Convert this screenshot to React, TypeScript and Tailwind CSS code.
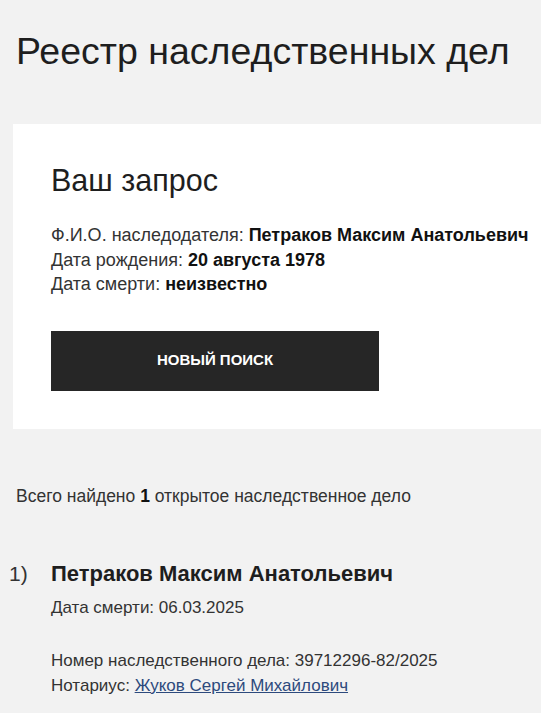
export default function App() {
  return (
    <div className="min-h-[713px] bg-[#f2f2f2] text-[#1e1e1e] font-['Liberation_Sans',Arial,sans-serif] overflow-hidden">
      <h1 className="pl-4 pt-[28px] text-[37.5px] leading-[46px] font-normal">
        Реестр наследственных дел
      </h1>

      <section className="mt-[50px] ml-[13px] bg-white pl-[38px] pt-[38px] pb-[38px]">
        <h2 className="text-[30.5px] leading-[36px] font-normal">Ваш запрос</h2>
        <div className="mt-[25px] text-[18px] leading-[24.5px] text-[#333] whitespace-nowrap">
          <p>
            Ф.И.О. наследодателя: <b className="text-[#111]">Петраков Максим Анатольевич</b>
          </p>
          <p>
            Дата рождения: <b className="text-[#111]">20 августа 1978</b>
          </p>
          <p>
            Дата смерти: <b className="text-[#111]">неизвестно</b>
          </p>
        </div>
        <button className="mt-[34px] flex h-[60px] w-[328px] items-center justify-center bg-[#262626] text-[15px] font-bold text-white">
          НОВЫЙ ПОИСК
        </button>
      </section>

      <p className="mt-[56px] pl-4 text-[17.5px] leading-[22px] text-[#333]">
        Всего найдено <b className="text-[#111]">1</b> открытое наследственное дело
      </p>

      <div className="mt-[53px] flex">
        <div className="w-[51px] pl-[9px] text-[21px] leading-[28px] text-[#333]">1)</div>
        <div>
          <div className="text-[22px] leading-[28px] font-bold">Петраков Максим Анатольевич</div>
          <div className="mt-[9px] text-[17px] leading-[22px] text-[#333]">Дата смерти: 06.03.2025</div>
          <div className="mt-[29px] text-[17px] leading-[25px] text-[#333]">
            <p>Номер наследственного дела: 39712296-82/2025</p>
            <p>
              Нотариус:{" "}
              <a href="#" className="text-[#2d4a7d] underline">
                Жуков Сергей Михайлович
              </a>
            </p>
          </div>
        </div>
      </div>
    </div>
  );
}
